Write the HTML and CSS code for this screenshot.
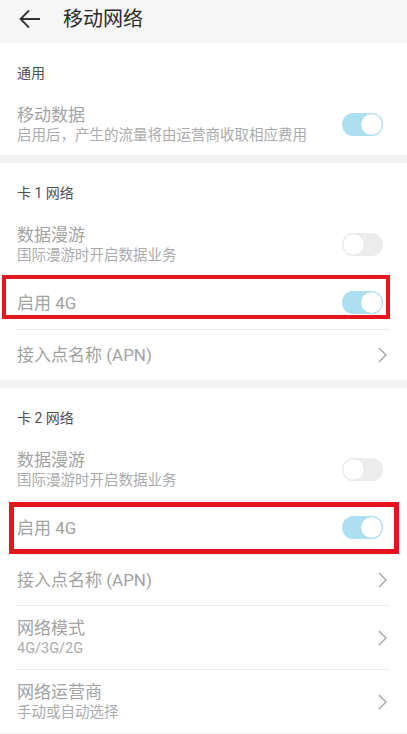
FILE: index.html
```html
<!DOCTYPE html>
<html lang="zh-CN">
<head>
  <meta charset="UTF-8" />
  <meta name="viewport" content="width=device-width, initial-scale=1.0"/>
  <title>移动网络</title>
  <link rel="stylesheet" href="styles.css">
</head>
<body>
  <header class="topbar">
    <svg class="back" width="22" height="20" viewBox="0 0 22 20">
      <path d="M21 10H2M10 1.5L1.5 10L10 18.5" fill="none" stroke="#333" stroke-width="1.8"/>
    </svg>
    <h1>移动网络</h1>
  </header>

  <section class="group">
    <div class="group-title">通用</div>
    <div class="item two-line">
      <div class="text"><div class="title">移动数据</div><div class="sub">启用后，产生的流量将由运营商收取相应费用</div></div>
      <span class="toggle on"></span>
    </div>
  </section>

  <section class="group">
    <div class="group-title">卡 1 网络</div>
    <div class="item two-line">
      <div class="text"><div class="title">数据漫游</div><div class="sub">国际漫游时开启数据业务</div></div>
      <span class="toggle"></span>
    </div>
    <div class="item single mark mark-a">
      <div class="text"><div class="title">启用 4G</div></div>
      <span class="toggle on"></span>
    </div>
    <div class="item link">
      <div class="text"><div class="title">接入点名称 (APN)</div></div>
      <svg class="chev" width="9" height="16" viewBox="0 0 9 16"><path d="M1 1l7 7-7 7" fill="none" stroke="#ababab" stroke-width="1.5"/></svg>
    </div>
  </section>

  <section class="group">
    <div class="group-title">卡 2 网络</div>
    <div class="item two-line">
      <div class="text"><div class="title">数据漫游</div><div class="sub">国际漫游时开启数据业务</div></div>
      <span class="toggle"></span>
    </div>
    <div class="item single mark mark-b">
      <div class="text"><div class="title">启用 4G</div></div>
      <span class="toggle on"></span>
    </div>
    <div class="item link">
      <div class="text"><div class="title">接入点名称 (APN)</div></div>
      <svg class="chev" width="9" height="16" viewBox="0 0 9 16"><path d="M1 1l7 7-7 7" fill="none" stroke="#ababab" stroke-width="1.5"/></svg>
    </div>
    <div class="item link tall">
      <div class="text"><div class="title">网络模式</div><div class="sub">4G/3G/2G</div></div>
      <svg class="chev" width="9" height="16" viewBox="0 0 9 16"><path d="M1 1l7 7-7 7" fill="none" stroke="#ababab" stroke-width="1.5"/></svg>
    </div>
    <div class="item link tall">
      <div class="text"><div class="title">网络运营商</div><div class="sub">手动或自动选择</div></div>
      <svg class="chev" width="9" height="16" viewBox="0 0 9 16"><path d="M1 1l7 7-7 7" fill="none" stroke="#ababab" stroke-width="1.5"/></svg>
    </div>
  </section>
</body>
</html>
```

FILE: styles.css
```css
* {
  margin: 0;
  padding: 0;
  box-sizing: border-box;
}

body {
  font-family: Roboto, "Noto Sans CJK SC", sans-serif;
  background: #f3f3f3;
  color: #333;
  width: 407px;
  min-height: 734px;
}

.topbar {
  height: 43px;
  background: #f6f6f6;
  display: flex;
  align-items: center;
  padding-left: 19px;
}

.topbar h1 {
  font-size: 20px;
  font-weight: 400;
  color: #2b2b2b;
  margin-left: 22px;
  line-height: 26px;
  margin-top: -6px;
}

.back {
  margin-top: -6px;
}

.group {
  background: #fff;
  margin-bottom: 8px;
}

.group-title {
  height: 51px;
  padding: 20px 0 0 17px;
  font-size: 14px;
  line-height: 20px;
  color: #505050;
}

.item {
  display: flex;
  align-items: center;
  margin: 0 17px;
  position: relative;
}

.item + .item {
  border-top: 1px solid #ebebeb;
}

.two-line { height: 61px; }
.single { height: 54px; }
.link { height: 51px; }
.link.tall { height: 64px; }

.text {
  flex: 1;
}

.title {
  font-size: 17px;
  line-height: 22px;
  color: #a2a2a2;
}

.sub {
  font-size: 14.5px;
  line-height: 20px;
  color: #ababab;
}

.toggle {
  width: 41px;
  height: 23px;
  border-radius: 12px;
  background: #ececec;
  margin-right: 7px;
  position: relative;
}

.toggle::after {
  content: "";
  position: absolute;
  top: 1px;
  left: 1px;
  width: 21px;
  height: 21px;
  border-radius: 50%;
  background: #fff;
  box-shadow: 0 0 1px rgba(0, 0, 0, 0.15);
}

.toggle.on {
  background: #ace0f1;
}

.toggle.on::after {
  left: 19px;
}

.chev {
  margin-right: 3px;
}

/* red annotation boxes */
.mark::after {
  content: "";
  position: absolute;
  border: 4px solid #e5151d;
}

.mark-a::after {
  top: -1px;
  bottom: 10px;
  left: -15px;
  right: 0;
}

.mark-b::after {
  top: 1px;
  bottom: 0;
  left: -8px;
  right: -9px;
  border-width: 5px;
}
```
